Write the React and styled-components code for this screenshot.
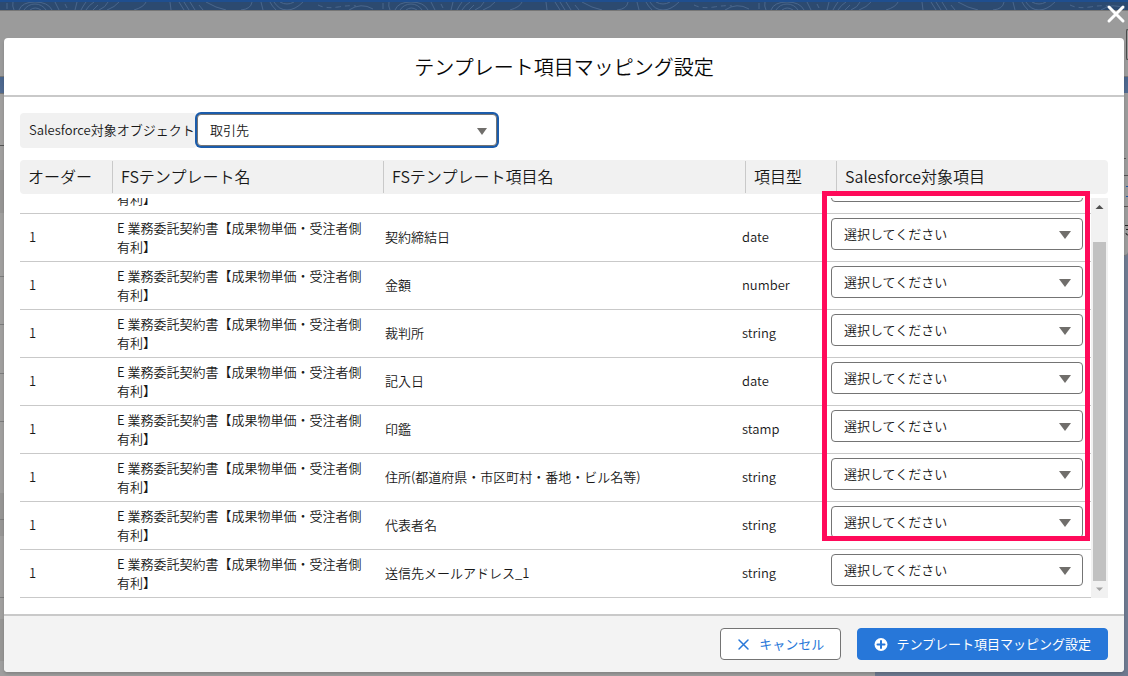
import React from "react";
import styled, { createGlobalStyle } from "styled-components";

const GlobalStyle = createGlobalStyle`
  *, *::before, *::after { box-sizing: border-box; }
  body {
    margin: 0;
    font-family: "Noto Sans CJK JP", "Noto Sans", sans-serif;
    font-size: 13px;
    line-height: 19px;
    font-weight: 350;
    color: #181818;
  }
  button, select { font: inherit; color: inherit; margin: 0; }
`;

const Page = styled.div`
  position: relative;
  min-height: 100vh;
  padding: 38px 4px 4px;
  display: flex;
  flex-direction: column;
  overflow: hidden;
`;

/* Dimmed application page behind the dialog */
const Backdrop = styled.div`
  position: absolute;
  inset: 0;
  z-index: -1;
  display: flex;
  flex-direction: column;
  background: #6e7a90;
`;

const BrandBand = styled.div`
  height: 10px;
  background: #2c4a70;
  border-top: 2px solid #1f4f90;
  svg { display: block; }
`;

const NavBand = styled.div`
  display: flex;
  justify-content: flex-end;
  height: 67px;
  padding-top: 18px;
  background: #9b9b9b;
  border-top: 1px solid #777777;
  border-bottom: 1px solid #777777;
`;

const NavButtonEdge = styled.div`
  width: 2px;
  height: 31px;
  border: 1px solid #4a4a4a;
  border-right: 0;
  border-radius: 4px 0 0 4px;
`;

const Columns = styled.div`
  display: flex;
  justify-content: space-between;
  flex: 1;
  padding-top: 16px;
  background: linear-gradient(#4a658c, #526b90 16px, #6e7a90 180px);
`;

const MainPane = styled.div`
  flex: 0 0 875px;
  border-top: 1px solid #777777;
  background: #9e9e9e;
`;

const Strip = styled.div`
  height: ${(p) => p.$h}px;
  background: ${(p) => (p.$dark ? "#969594" : "#a09f9e")};
  border-bottom: ${(p) => (p.$line ? `1px solid ${p.$line}` : "0")};
`;

const SidePane = styled.div`
  width: 8px;
  height: 163px;
  border-bottom: 1px solid #777777;
  border-radius: 0 0 4px 4px;
  background: #9b9b9b;
  svg { display: block; }
`;

const CloseButton = styled.button`
  position: absolute;
  top: 4px;
  right: 2px;
  width: 20px;
  height: 20px;
  padding: 0;
  border: 0;
  background: none;
  svg { display: block; }
`;

const Dialog = styled.section`
  flex: 1;
  display: flex;
  flex-direction: column;
  border-radius: 4px;
  background: #ffffff;
  box-shadow: 0 2px 3px rgba(0, 0, 0, 0.16);
`;

const DialogHeader = styled.header`
  padding: 14px 16px 13px;
  border-bottom: 2px solid #c9c9c9;
  text-align: center;
`;

const Title = styled.h1`
  margin: 0;
  font-size: 20px;
  line-height: 30px;
  font-weight: 350;
  color: #080707;
`;

const DialogBody = styled.div`
  flex: 1;
  padding: 16px;
`;

const ObjectRow = styled.div`
  display: flex;
  align-items: flex-end;
  height: 35px;
  margin-bottom: 12px;
`;

const ObjectLabel = styled.label`
  display: flex;
  align-items: center;
  width: 177px;
  height: 35px;
  padding: 0 0 2px 9px;
  border-radius: 4px;
  background: #f1f1f1;
  white-space: nowrap;
`;

const SelectBox = styled.span`
  position: relative;
  display: block;
  width: ${(p) => p.$width || "100%"};
  height: ${(p) => (p.$focused ? 34 : 32)}px;
  svg {
    position: absolute;
    top: ${(p) => (p.$focused ? 14 : 13)}px;
    right: ${(p) => (p.$focused ? 10 : 12)}px;
    pointer-events: none;
  }
`;

const Select = styled.select`
  display: block;
  appearance: none;
  width: 100%;
  height: 32px;
  padding: 0 28px 2px 12px;
  border: 1px solid #747474;
  border-radius: 4px;
  background: #ffffff;
  outline: none;
  box-shadow: ${(p) => (p.$focused ? "0 0 0 2px #1b5cab" : "none")};
`;

const TableArea = styled.div`
  position: relative;
`;

const Table = styled.table`
  display: block;
  width: 100%;
`;

const Head = styled.thead`
  display: block;
`;

const HeadRow = styled.tr`
  display: grid;
  grid-template-columns: 93fr 271fr 362fr 91fr 271fr;
  height: 34px;
  padding: 1px 0;
  border-radius: 4px;
  background: #f1f1f1;
`;

const HeadCell = styled.th`
  padding: 0 8px;
  border-right: 1px solid #c9c9c9;
  font-size: 16px;
  line-height: 30px;
  font-weight: 350;
  text-align: left;
  white-space: nowrap;
  &:last-child { border-right: 0; }
`;

const Body = styled.tbody`
  display: flex;
  flex-direction: column;
  justify-content: flex-end;
  height: 400px;
  margin-top: 4px;
  padding-right: 17px;
  overflow: hidden;
`;

const Row = styled.tr`
  display: grid;
  grid-template-columns: 88fr 268fr 357fr 89fr 269fr;
  flex: 0 0 48px;
  border-bottom: 1px solid #c9c9c9;
`;

const Cell = styled.td`
  display: flex;
  align-items: ${(p) => (p.$end ? "flex-end" : "center")};
  padding: 0 9px ${(p) => (p.$end ? 5 : 2)}px;
`;

const SelectCell = styled.td`
  padding: 4px 8px 0 9px;
`;

const ScrollTrack = styled.div`
  position: absolute;
  top: 38px;
  right: 0;
  bottom: 0;
  width: 17px;
  display: flex;
  flex-direction: column;
  align-items: center;
  background: #f1f1f1;
  svg { display: block; flex: 0 0 17px; }
`;

const ScrollThumb = styled.div`
  flex: 1;
  width: 13px;
  margin-top: 27px;
  background: #c1c1c1;
`;

const Highlight = styled.div`
  position: absolute;
  top: 31px;
  right: 18px;
  width: 268px;
  height: 350px;
  border: 5px solid #ff0a5a;
  pointer-events: none;
`;

const DialogFooter = styled.footer`
  display: flex;
  justify-content: flex-end;
  gap: 16px;
  padding: 12px 16px;
  border-top: 2px solid #c9c9c9;
  border-radius: 0 0 4px 4px;
  background: #f3f3f3;
`;

const Button = styled.button`
  display: flex;
  align-items: center;
  gap: 8px;
  height: 32px;
  padding: 0 16px;
  border: 1px solid ${(p) => (p.$primary ? "#2777d9" : "#747474")};
  border-radius: 4px;
  background: ${(p) => (p.$primary ? "#2777d9" : "#ffffff")};
  color: ${(p) => (p.$primary ? "#ffffff" : "#2777d9")};
  font-weight: 400;
  white-space: nowrap;
  span { padding-bottom: 2px; }
`;

const Caret = ({ w = 12, h = 8 }) => (
  <svg width={w} height={h} viewBox="0 0 12 8" preserveAspectRatio="none" aria-hidden="true">
    <path d="M0 0h12L6 8z" fill="#706e6b" />
  </svg>
);

const Contours = () => (
  <svg width="100%" height="8" aria-hidden="true">
    <defs>
      <pattern id="contours" width="376" height="8" patternUnits="userSpaceOnUse">
        <g fill="none" stroke="#48658b" strokeWidth="1">
          <path d="M7 1v6M13 0q-1 4 1 8M19 8Q22 0 35 0T52 8M24 8Q28 2 35 2T46 8M30 8Q35 4 41 8M55 0l4 8M65 2l2 4" />
          <path d="M75 8l2-8M81 8q2-4 5-8M86 8q3-5 8-8M93 8l5-5M99 8q7-3 9-8M107 8q8-3 12-8" />
          <path d="M134 8q10-3 12-8M170 0l1 8M179 0l5 8M184 0l5 8M190 0l5 8M199 3l4 5" />
          <path d="M206 0q10 6 20 8M241 8q10-1 11-8M261 0l2 8M270 0q2 4 6 8M274 0q5 8 13 8t16-8M280 0q7 4 14 0" />
          <path d="M318 3q8 4 20 2t18-1" strokeDasharray="5 4" />
          <path d="M349 8q12-8 24-1" />
        </g>
      </pattern>
    </defs>
    <rect width="100%" height="8" fill="url(#contours)" />
  </svg>
);

const strips = [
  { h: 52, line: "#555555" },
  { h: 24 },
  { h: 43, dark: true },
  { h: 64, line: "#7c7c7c" },
  { h: 48, line: "#7c7c7c" },
  { h: 49, line: "#7c7c7c" },
  { h: 48, line: "#7c7c7c" },
  { h: 71 },
  { h: 27, dark: true, line: "#7c7c7c" },
  { h: 16, dark: true },
  { h: 62, line: "#7c7c7c" },
  { h: 21 },
  { h: 42, dark: true },
];

const templateName = "E 業務委託契約書【成果物単価・受注者側有利】";

const rows = [
  { field: "契約締結日", type: "date" },
  { field: "金額", type: "number" },
  { field: "裁判所", type: "string" },
  { field: "記入日", type: "date" },
  { field: "印鑑", type: "stamp" },
  { field: "住所(都道府県・市区町村・番地・ビル名等)", type: "string" },
  { field: "代表者名", type: "string" },
  { field: "送信先メールアドレス_1", type: "string" },
];

const headings = ["オーダー", "FSテンプレート名", "FSテンプレート項目名", "項目型", "Salesforce対象項目"];

export default function App() {
  return (
    <Page>
      <GlobalStyle />
      <Backdrop aria-hidden="true">
        <BrandBand>
          <Contours />
        </BrandBand>
        <NavBand>
          <NavButtonEdge />
        </NavBand>
        <Columns>
          <MainPane>
            {strips.map((s, i) => (
              <Strip key={i} $h={s.h} $dark={s.dark} $line={s.line} />
            ))}
          </MainPane>
          <SidePane>
            <svg width="8" height="162" aria-hidden="true">
              <path d="M4 65.500h2M0 82.500h8M0 113.500h8" stroke="#555555" />
              <path d="M6 93.500h2M6 103.500h2" stroke="#1f5aa0" />
              <path d="M5 132.500h3M6 136.500h2M6 140q0 2 2 2" stroke="#222222" fill="none" />
            </svg>
          </SidePane>
        </Columns>
      </Backdrop>

      <CloseButton type="button" aria-label="閉じる">
        <svg width="20" height="20" viewBox="0 0 20 20" aria-hidden="true">
          <path d="M3 3l14 14M17 3L3 17" stroke="#ffffff" strokeWidth="3" strokeLinecap="round" />
        </svg>
      </CloseButton>

      <Dialog role="dialog" aria-labelledby="dialog-title">
        <DialogHeader>
          <Title id="dialog-title">テンプレート項目マッピング設定</Title>
        </DialogHeader>

        <DialogBody>
          <ObjectRow>
            <ObjectLabel htmlFor="target-object">Salesforce対象オブジェクト</ObjectLabel>
            <SelectBox $width="300px" $focused>
              <Select id="target-object" $focused>
                <option>取引先</option>
              </Select>
              <Caret w={10} h={7} />
            </SelectBox>
          </ObjectRow>

          <TableArea>
            <Table>
              <Head>
                <HeadRow>
                  {headings.map((h) => (
                    <HeadCell key={h} scope="col">{h}</HeadCell>
                  ))}
                </HeadRow>
              </Head>
              <Body>
                {/* Row that is mostly scrolled out under the header */}
                <Row>
                  <Cell />
                  <Cell $end>有利】</Cell>
                  <Cell />
                  <Cell />
                  <SelectCell>
                    <SelectBox>
                      <Select aria-label="Salesforce対象項目" />
                    </SelectBox>
                  </SelectCell>
                </Row>
                {rows.map((r) => (
                  <Row key={r.field}>
                    <Cell>1</Cell>
                    <Cell>{templateName}</Cell>
                    <Cell>{r.field}</Cell>
                    <Cell>{r.type}</Cell>
                    <SelectCell>
                      <SelectBox>
                        <Select aria-label={r.field}>
                          <option>選択してください</option>
                        </Select>
                        <Caret />
                      </SelectBox>
                    </SelectCell>
                  </Row>
                ))}
              </Body>
            </Table>
            <ScrollTrack aria-hidden="true">
              <svg width="17" height="17"><path d="M4.500 11L8.500 7l4 4z" fill="#505050" /></svg>
              <ScrollThumb />
              <svg width="17" height="17"><path d="M5 6.500h7L8.500 10z" fill="#a3a3a3" /></svg>
            </ScrollTrack>
            <Highlight />
          </TableArea>
        </DialogBody>

        <DialogFooter>
          <Button type="button">
            <svg width="14" height="14" viewBox="0 0 14 14" aria-hidden="true">
              <path d="M2 3l9 9M11 3l-9 9" stroke="#2777d9" strokeWidth="1.500" strokeLinecap="round" />
            </svg>
            <span>キャンセル</span>
          </Button>
          <Button type="button" $primary>
            <svg width="14" height="14" viewBox="0 0 14 14" aria-hidden="true">
              <circle cx="7" cy="7.500" r="6.500" fill="#ffffff" />
              <path d="M7 4v7M3.500 7.500h7" stroke="#2777d9" strokeWidth="2" strokeLinecap="round" />
            </svg>
            <span>テンプレート項目マッピング設定</span>
          </Button>
        </DialogFooter>
      </Dialog>
    </Page>
  );
}
